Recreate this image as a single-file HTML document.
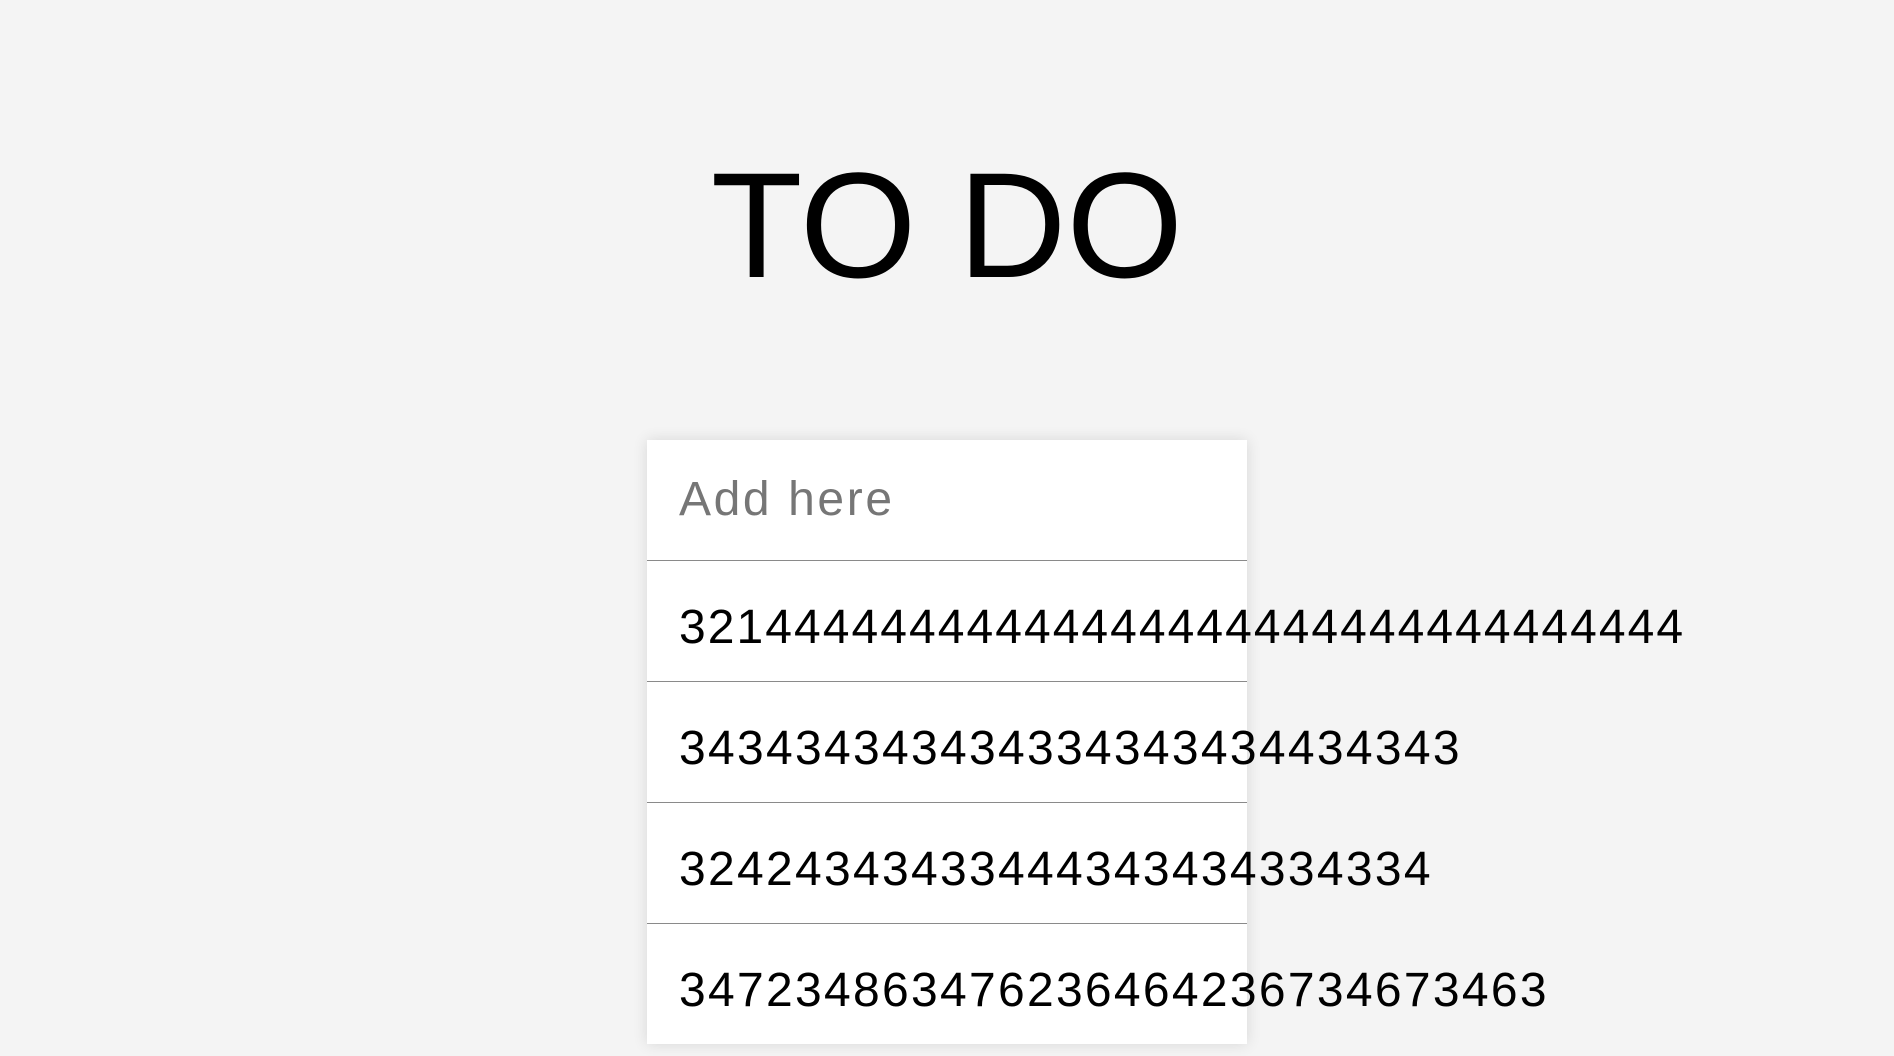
<!DOCTYPE html>
<html><head><style>
html,body{margin:0;padding:0;background:#f4f4f4;width:1894px;height:1056px;overflow:hidden;font-family:"Liberation Sans",sans-serif;}
.title{position:absolute;left:0;width:1894px;top:150px;text-align:center;font-size:150px;line-height:150px;letter-spacing:0px;color:#000;}
.box{position:absolute;left:647px;top:440px;width:600px;background:#fff;box-shadow:0 0 14px rgba(0,0,0,0.12);}
.row{height:120px;border-bottom:1px solid #8a8a8a;padding-left:32px;font-size:48px;line-height:120px;white-space:nowrap;box-sizing:content-box;}
.in{color:#767676;letter-spacing:2.6px;}
.it{line-height:114px;height:110px;padding-top:10px;color:#000;letter-spacing:2.3px;}
.row:last-child{border-bottom:none;}
</style></head><body>
<div class="title">TO DO</div>
<div class="box">
<div class="row in">Add here</div>
<div class="row it" style="letter-spacing:2.05px">32144444444444444444444444444444444</div>
<div class="row it">343434343434334343434434343</div>
<div class="row it">32424343433444343434334334</div>
<div class="row it">347234863476236464236734673463</div>
</div>
</body></html>
